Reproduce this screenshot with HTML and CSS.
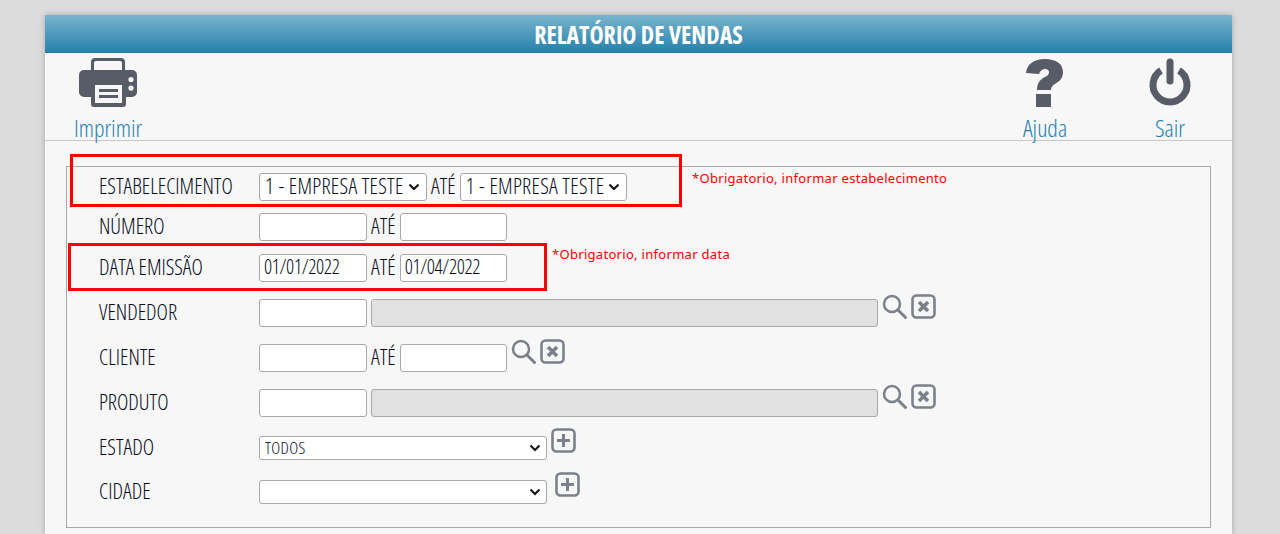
FILE: index.html
```html
<!DOCTYPE html>
<html lang="pt-BR">
<head>
<meta charset="utf-8">
<title>Relatório de Vendas</title>
<link rel="stylesheet" href="styles.css">
</head>
<body>
<main class="card">
  <h1 class="title">RELATÓRIO DE VENDAS</h1>
  <nav class="toolbar">
    <a class="tool tool-print">
      <svg class="tool-icon" width="60" height="50" viewBox="0 0 60 50"><path fill-rule="evenodd" fill="#585c67" d="M17 0h26a4 4 0 0 1 4 4v8h-3V5a2 2 0 0 0-2-2H18a2 2 0 0 0-2 2v7h-3V4a4 4 0 0 1 4-4zM6 12h48a5 5 0 0 1 5 5v17a5 5 0 0 1-5 5h-6v7a3 3 0 0 1-3 3H16a3 3 0 0 1-3-3v-7H6a5 5 0 0 1-5-5V17a5 5 0 0 1 5-5zm47 7a2.600 2.600 0 1 0 0 5.200 2.600 2.600 0 0 0 0-5.200zm0 8.500a2.600 2.600 0 1 0 0 5.200 2.600 2.600 0 0 0 0-5.200zM17 27v18h27V27zm4 4h19v3H21zm0 6h19v3H21z"/></svg>
      <span>Imprimir</span>
    </a>
    <a class="tool tool-help">
      <svg class="tool-icon" width="40" height="50" viewBox="0 0 40 50"><path fill="#585c67" d="M1 15C2 6 9 1 20 1c11 0 18 5 18 13 0 6-3 9-8 12-3 2-4 3-4 6H12c0-6 2-9 6-12 4-2 6-3 6-6 0-2-2-3-4-3-3 0-5 2-6 5zM11 36h15v13H11z"/></svg>
      <span>Ajuda</span>
    </a>
    <a class="tool tool-exit">
      <svg class="tool-icon" width="44" height="50" viewBox="0 0 44 50"><path fill="none" stroke="#585c67" stroke-width="7" d="M13 12.500a17 17 0 1 0 18 0"/><path fill="none" stroke="#585c67" stroke-width="7" stroke-linecap="round" d="M22 4v19"/></svg>
      <span>Sair</span>
    </a>
  </nav>
  <section class="panel">
    <form class="filters">
      <div class="row row-1">
        <label class="field-label">ESTABELECIMENTO</label>
        <select class="select-company"><option>1 - EMPRESA TESTE</option></select>
        <span class="ate">ATÉ</span>
        <select class="select-company select-end"><option>1 - EMPRESA TESTE</option></select>
      </div>
      <div class="row row-2">
        <label class="field-label">NÚMERO</label>
        <input class="input-short" type="text">
        <span class="ate">ATÉ</span>
        <input class="input-short input-end" type="text">
      </div>
      <div class="row row-3">
        <label class="field-label">DATA EMISSÃO</label>
        <input class="input-short" type="text" value="01/01/2022">
        <span class="ate">ATÉ</span>
        <input class="input-short input-end" type="text" value="01/04/2022">
      </div>
      <div class="row row-4">
        <label class="field-label">VENDEDOR</label>
        <input class="input-short" type="text">
        <input class="input-long" type="text" disabled>
        <svg class="icon icon-search" width="26" height="26" viewBox="0 0 26 26"><circle cx="10" cy="10" r="8" fill="none" stroke="#7c808a" stroke-width="2.500"/><path d="M16 16l7.500 7.500" stroke="#7c808a" stroke-width="3" stroke-linecap="round"/></svg>
        <svg class="icon icon-box" width="26" height="26" viewBox="0 0 26 26"><rect x="1.500" y="1.500" width="22" height="22" rx="4" fill="none" stroke="#7c808a" stroke-width="2.600"/><path d="M8 8l9 9M17 8l-9 9" stroke="#7c808a" stroke-width="3.500"/></svg>
      </div>
      <div class="row row-5">
        <label class="field-label">CLIENTE</label>
        <input class="input-short" type="text">
        <span class="ate">ATÉ</span>
        <input class="input-short input-end" type="text">
        <svg class="icon icon-search" width="26" height="26" viewBox="0 0 26 26"><circle cx="10" cy="10" r="8" fill="none" stroke="#7c808a" stroke-width="2.500"/><path d="M16 16l7.500 7.500" stroke="#7c808a" stroke-width="3" stroke-linecap="round"/></svg>
        <svg class="icon icon-box" width="26" height="26" viewBox="0 0 26 26"><rect x="1.500" y="1.500" width="22" height="22" rx="4" fill="none" stroke="#7c808a" stroke-width="2.600"/><path d="M8 8l9 9M17 8l-9 9" stroke="#7c808a" stroke-width="3.500"/></svg>
      </div>
      <div class="row row-6">
        <label class="field-label">PRODUTO</label>
        <input class="input-short" type="text">
        <input class="input-long" type="text" disabled>
        <svg class="icon icon-search" width="26" height="26" viewBox="0 0 26 26"><circle cx="10" cy="10" r="8" fill="none" stroke="#7c808a" stroke-width="2.500"/><path d="M16 16l7.500 7.500" stroke="#7c808a" stroke-width="3" stroke-linecap="round"/></svg>
        <svg class="icon icon-box" width="26" height="26" viewBox="0 0 26 26"><rect x="1.500" y="1.500" width="22" height="22" rx="4" fill="none" stroke="#7c808a" stroke-width="2.600"/><path d="M8 8l9 9M17 8l-9 9" stroke="#7c808a" stroke-width="3.500"/></svg>
      </div>
      <div class="row row-7">
        <label class="field-label">ESTADO</label>
        <select class="select-wide"><option>TODOS</option></select>
        <svg class="icon icon-plus" width="26" height="26" viewBox="0 0 26 26"><rect x="1.500" y="1.500" width="22" height="22" rx="4" fill="none" stroke="#7c808a" stroke-width="2.600"/><path d="M12.500 6v13M6 12.500h13" stroke="#7c808a" stroke-width="3"/></svg>
      </div>
      <div class="row row-8">
        <label class="field-label">CIDADE</label>
        <select class="select-wide"><option></option></select>
        <svg class="icon icon-plus icon-plus-far" width="26" height="26" viewBox="0 0 26 26"><rect x="1.500" y="1.500" width="22" height="22" rx="4" fill="none" stroke="#7c808a" stroke-width="2.600"/><path d="M12.500 6v13M6 12.500h13" stroke="#7c808a" stroke-width="3"/></svg>
      </div>
    </form>
    <div class="mark mark-company"></div>
    <div class="mark mark-date"></div>
    <p class="note note-company">*Obrigatorio, informar estabelecimento</p>
    <p class="note note-date">*Obrigatorio, informar data</p>
  </section>
</main>
</body>
</html>
```

FILE: styles.css
```css
* { box-sizing: border-box; }
html, body { height: 100%; overflow: hidden; }
body {
  margin: 0;
  background: #dcdcdc;
  font-family: "Open Sans", "Liberation Sans", sans-serif;
  font-stretch: 75%;
  font-weight: 300;
  color: #060b18;
}
.card {
  margin: 15px 48px 0 45px;
  height: 519px;
  background: #f7f7f7;
  box-shadow: 0 0 6px rgba(0, 0, 0, 0.25);
}
.title {
  margin: 0;
  height: 38px;
  line-height: 40px;
  text-align: center;
  font-size: 24px;
  font-weight: 700;
  color: #fff;
  background: linear-gradient(#7ab4ce, #2480aa);
}
.toolbar {
  display: flex;
  height: 88px;
  border-bottom: 1px solid #c8c8c8;
}
.tool {
  display: flex;
  flex-direction: column;
  align-items: center;
  width: 80px;
  font-size: 24px;
  line-height: 22px;
  color: #1f7fb5;
}
.tool-icon { display: block; flex: none; margin-top: 5px; margin-bottom: 9px; }
.tool-print { margin-left: 23px; margin-right: auto; }
.tool-help { margin-right: 45px; }
.tool-exit { margin-right: 22px; }
.panel {
  position: relative;
  margin: 25px 21px 0;
  height: 362px;
  border: 1px solid #a8a8a8;
}
.filters { display: block; padding: 6px 0 0 32px; }
.row {
  display: flex;
  align-items: center;
  font-size: 21.500px;
}
.row-1 { height: 28px; }
.row-2, .row-3 { height: 28px; margin-top: 12px; }
.row-3 { margin-top: 13px; }
.row-4, .row-5, .row-6 { height: 28px; margin-top: 17px; }
.row-7 { height: 24px; margin-top: 19px; }
.row-8 { height: 24px; margin-top: 20px; }
.field-label { width: 160px; flex: none; padding-bottom: 4px; }
.ate { margin: 0 4px; padding-bottom: 4px; }
input, select {
  height: 100%;
  font: inherit;
  color: inherit;
  background-color: #fff;
  border: 1px solid #a8a8a8;
  border-radius: 3px;
}
input {
  padding: 0 4px 4px;
  font-size: 20px;
  letter-spacing: -0.35px;
}
select {
  appearance: none;
  padding: 0 22px 0 5px;
  line-height: 20px;
  letter-spacing: 0.3px;
  background-image: url("data:image/svg+xml,%3Csvg xmlns='http://www.w3.org/2000/svg' width='12' height='8'%3E%3Cpath d='M1.500 1.500L6 6l4.500-4.500' fill='none' stroke='%23111' stroke-width='2'/%3E%3C/svg%3E");
  background-repeat: no-repeat;
  background-position: right 6px center;
}
.select-company { width: 168px; padding-bottom: 3px; }
.select-end { width: 167px; }
.input-short { width: 108px; }
.input-end { width: 107px; }
.input-long { width: 507px; margin-left: 4px; background: #e1e1e1; }
.select-wide {
  width: 288px;
  font-size: 17px;
  background-position: right 5px center;
}
.icon { flex: none; align-self: flex-start; }
.icon-search { margin: -5px 0 0 4px; }
.icon-box { margin: -5px 0 0 3px; }
.icon-plus { margin: -8px 0 0 4px; }
.icon-plus-far { margin-left: 8px; }
.mark {
  position: absolute;
  border: 3px solid #ff0000;
}
.mark-company { left: 3px; top: -13px; width: 612px; height: 53px; }
.mark-date { left: 1px; top: 76px; width: 479px; height: 48px; }
.note {
  position: absolute;
  margin: 0;
  font-family: "Noto Sans", sans-serif;
  font-stretch: 100%;
  font-weight: 400;
  font-size: 13px;
  letter-spacing: 0.3px;
  line-height: 16px;
  white-space: nowrap;
  color: #ff0000;
}
.note-company { left: 625px; top: 3px; }
.note-date { left: 485px; top: 79px; }
```
